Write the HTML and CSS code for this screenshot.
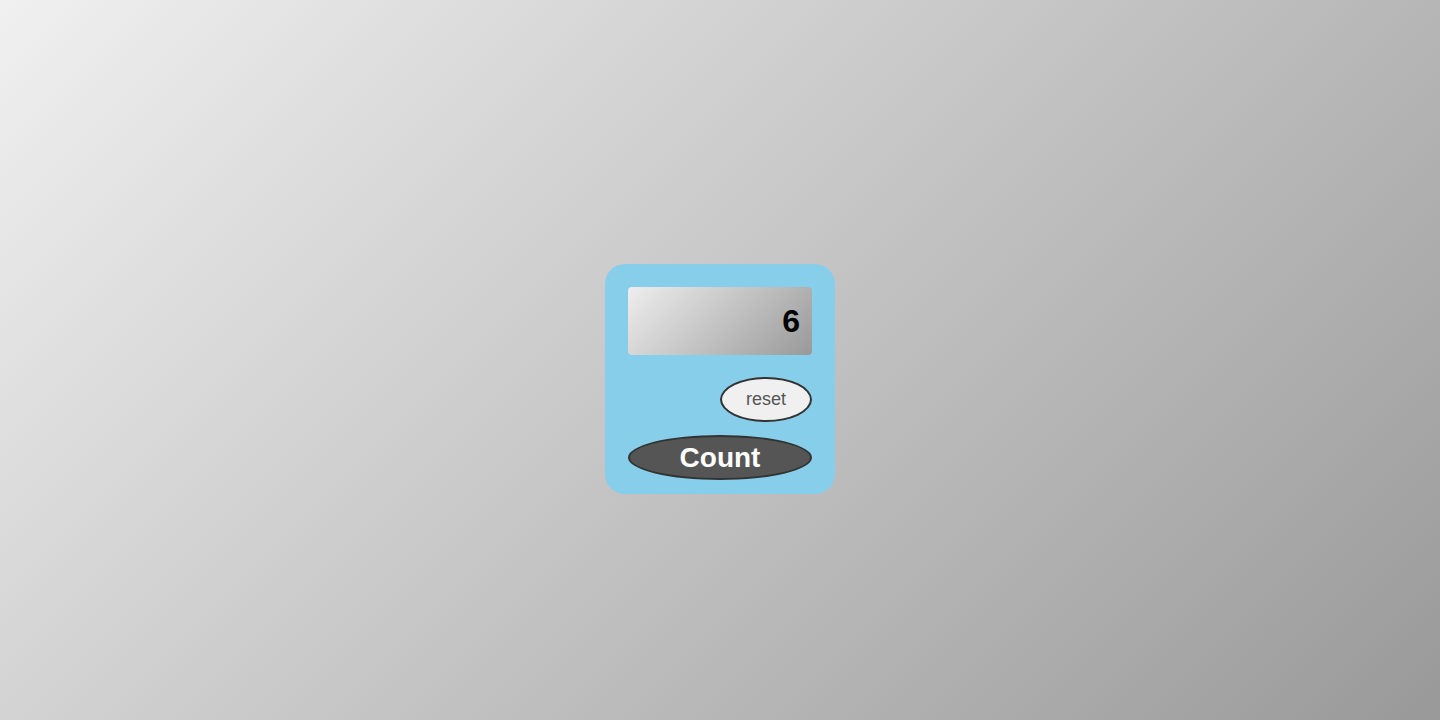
FILE: index.html
```html
<!DOCTYPE html>
<html>
<head>
<meta charset="utf-8">
<link rel="stylesheet" href="styles.css">
</head>
<body>
<div class="counter">
  <div class="display">6</div>
  <button class="reset">reset</button>
  <button class="count">Count</button>
</div>
</body>
</html>
```
FILE: styles.css
```css
html, body {
  margin: 0;
  height: 100%;
}
body {
  box-sizing: border-box;
  padding-top: 38px;
  display: flex;
  align-items: center;
  justify-content: center;
  background: linear-gradient(135deg, #f0f0f0, #999);
  font-family: "Liberation Sans", Arial, sans-serif;
}
.counter {
  box-sizing: border-box;
  width: 230px;
  padding: 23px 23px 14px;
  background: #87ceeb;
  border-radius: 20px;
  display: flex;
  flex-direction: column;
}
.display {
  height: 68px;
  border-radius: 4px;
  background: linear-gradient(135deg, #eee, #999);
  display: flex;
  align-items: center;
  justify-content: flex-end;
  padding-right: 12px;
  font-weight: bold;
  font-size: 32px;
  color: #000;
  margin-bottom: 22px;
}
.reset {
  align-self: flex-end;
  width: 92px;
  height: 45px;
  border-radius: 50%;
  border: 2px solid #333;
  background: #f0f0f0;
  color: #555;
  font-family: "Liberation Sans", Arial, sans-serif;
  font-size: 18px;
  margin-bottom: 13px;
  padding: 0;
}
.count {
  width: 184px;
  height: 45px;
  border-radius: 50%;
  border: 2px solid #333;
  background: #555;
  color: #fff;
  font-family: "Liberation Sans", Arial, sans-serif;
  font-weight: bold;
  font-size: 28px;
  padding: 0;
}
```
